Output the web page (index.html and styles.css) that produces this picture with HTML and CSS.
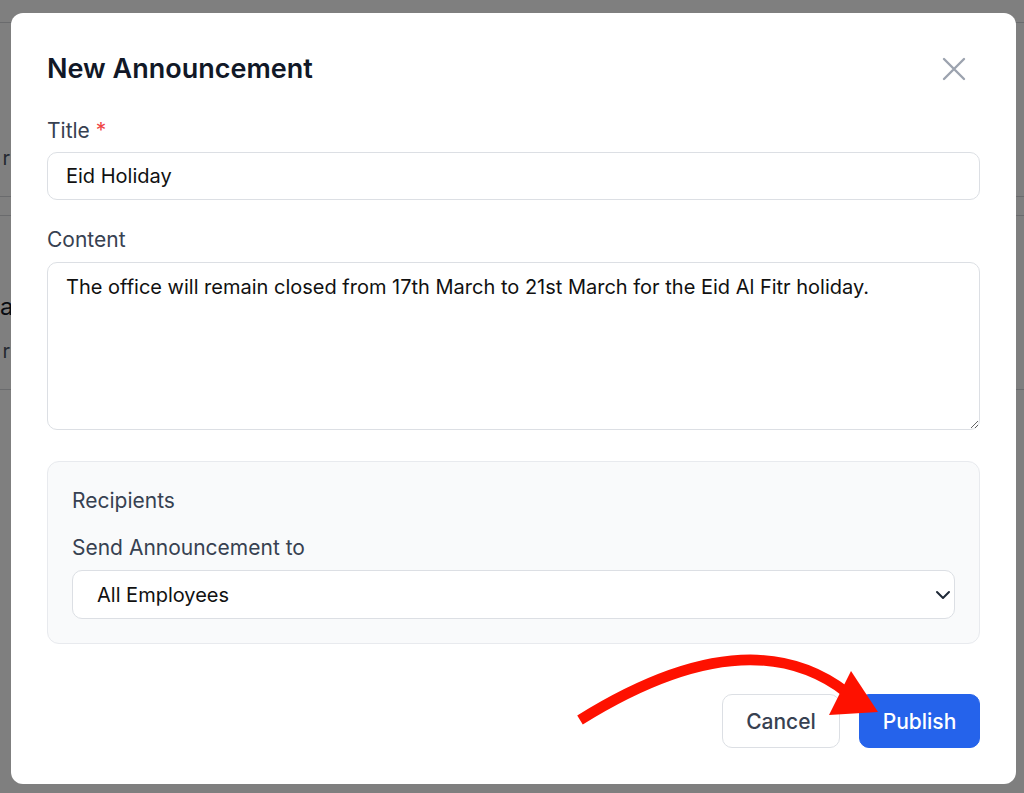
FILE: index.html
```html
<!DOCTYPE html>
<html lang="en">
<head>
<meta charset="utf-8">
<title>New Announcement</title>
<link rel="stylesheet" href="styles.css">
</head>
<body>
<div class="page">
  <div class="page-top"></div>
  <div class="page-head"><span class="peek peek-sm">r</span></div>
  <div class="page-tabs"></div>
  <div class="page-row">
    <span class="peek peek-lg">a</span>
    <span class="peek peek-sm">r</span>
  </div>
</div>

<div class="overlay">
  <div class="modal">
    <div class="modal-header">
      <h2 class="modal-title">New Announcement</h2>
      <button class="close-btn" type="button" aria-label="Close">
        <svg width="24" height="24" viewBox="0 0 24 24" fill="none" stroke="currentColor" stroke-width="2.4" stroke-linecap="round"><path d="M2 2 L22 22 M22 2 L2 22"/></svg>
      </button>
    </div>

    <label class="field-label label-title">Title <span class="req">*</span></label>
    <input class="text-input" type="text" value="Eid Holiday">

    <label class="field-label label-content">Content</label>
    <textarea class="text-area">The office will remain closed from 17th March to 21st March for the Eid Al Fitr holiday.</textarea>

    <div class="recipients">
      <div class="rec-title">Recipients</div>
      <label class="rec-label">Send Announcement to</label>
      <div class="select-wrap">
        <select class="select">
          <option>All Employees</option>
        </select>
        <svg class="chevron" width="16" height="10" viewBox="0 0 16 10" fill="none" stroke="#1f2937" stroke-width="2" stroke-linecap="round" stroke-linejoin="round"><path d="M2 2 L8 8 L14 2"/></svg>
      </div>
    </div>

    <div class="actions">
      <button class="btn btn-cancel" type="button">Cancel</button>
      <button class="btn btn-publish" type="button">Publish</button>
    </div>
  </div>
</div>

<svg class="annotation" width="1024" height="793" viewBox="0 0 1024 793">
  <path d="M580 720 Q 747 616 846 692" fill="none" stroke="#fe1100" stroke-width="10.5"/>
  <polygon points="851,671 878,712 829,715" fill="#fe1100"/>
</svg>
</body>
</html>
```

FILE: styles.css
```css
* { box-sizing: border-box; }

html, body {
  margin: 0;
  padding: 0;
  width: 1024px;
  height: 793px;
  overflow: hidden;
  background: #ffffff;
  font-family: Inter, "Noto Sans", "Liberation Sans", sans-serif;
}

/* underlying page, dimmed by overlay */
.page {
  width: 1024px;
  height: 793px;
}
.page-top {
  height: 23px;
  border-bottom: 1px solid #d4d6da;
}
.page-head {
  height: 174px;
  border-bottom: 1px solid #d4d6da;
  padding-top: 121px;
}
.page-tabs {
  height: 19px;
  border-bottom: 1px solid #d4d6da;
}
.page-row {
  height: 174px;
  border-bottom: 1px solid #d4d6da;
  padding-top: 75px;
  display: flex;
  flex-direction: column;
  gap: 14px;
}
.peek {
  display: block;
  width: 10px;
  text-align: right;
  white-space: nowrap;
}
.peek-sm {
  font-size: 20px;
  line-height: 28px;
  color: #4b5563;
}
.peek-lg {
  font-size: 24px;
  line-height: 32px;
  color: #111827;
}

.overlay {
  position: fixed;
  inset: 0;
  background: rgba(0, 0, 0, 0.5);
  padding: 13px 8px 9px 11px;
  display: flex;
}

.modal {
  flex: 1;
  background: #ffffff;
  border-radius: 12px;
  padding: 40px 36px 36px 36px;
  display: flex;
  flex-direction: column;
}

.modal-header {
  display: flex;
  align-items: center;
  justify-content: space-between;
  height: 32px;
}
.modal-title {
  margin: 0;
  font-size: 27px;
  line-height: 32px;
  font-weight: 600;
  color: #111827;
}
.close-btn {
  border: 0;
  background: none;
  padding: 0;
  margin-right: 14px;
  color: #9ca3af;
  width: 24px;
  height: 24px;
  display: flex;
}

.field-label {
  display: block;
  font-size: 21px;
  line-height: 28px;
  color: #374151;
}
.label-title { margin-top: 32px; }
.label-content { margin-top: 26px; }
.req { color: #ef4444; }

.text-input,
.text-area,
.select {
  width: 100%;
  font-family: inherit;
  font-size: 20px;
  color: #111111;
  border: 1px solid #dcdfe4;
  border-radius: 10px;
  background: #ffffff;
  outline: none;
}
.text-input {
  margin-top: 7px;
  height: 48px;
  padding: 0 18px;
}
.text-area {
  margin-top: 8px;
  height: 168px;
  padding: 12px 18px;
  line-height: 24px;
  resize: vertical;
}

.recipients {
  margin-top: 31px;
  background: #f9fafb;
  border: 1px solid #e8eaee;
  border-radius: 12px;
  padding: 25px 24px 24px 24px;
}
.rec-title,
.rec-label {
  display: block;
  font-size: 21px;
  line-height: 28px;
  color: #374151;
}
.rec-label { margin-top: 19px; }

.select-wrap {
  position: relative;
  margin-top: 8px;
}
.select {
  appearance: none;
  -webkit-appearance: none;
  height: 49px;
  padding: 0 24px;
}
.chevron {
  position: absolute;
  right: 4px;
  top: 20px;
  pointer-events: none;
}

.actions {
  margin-top: 50px;
  display: flex;
  justify-content: flex-end;
  gap: 19px;
}
.btn {
  height: 54px;
  border-radius: 10px;
  font-family: inherit;
  font-size: 21px;
  font-weight: 500;
  padding: 0;
}
.btn-cancel {
  width: 118px;
  background: #ffffff;
  border: 1px solid #dcdfe4;
  color: #374151;
}
.btn-publish {
  width: 121px;
  background: #2563eb;
  border: 1px solid #2563eb;
  color: #ffffff;
}

.annotation {
  position: absolute;
  left: 0;
  top: 0;
  pointer-events: none;
}
```
